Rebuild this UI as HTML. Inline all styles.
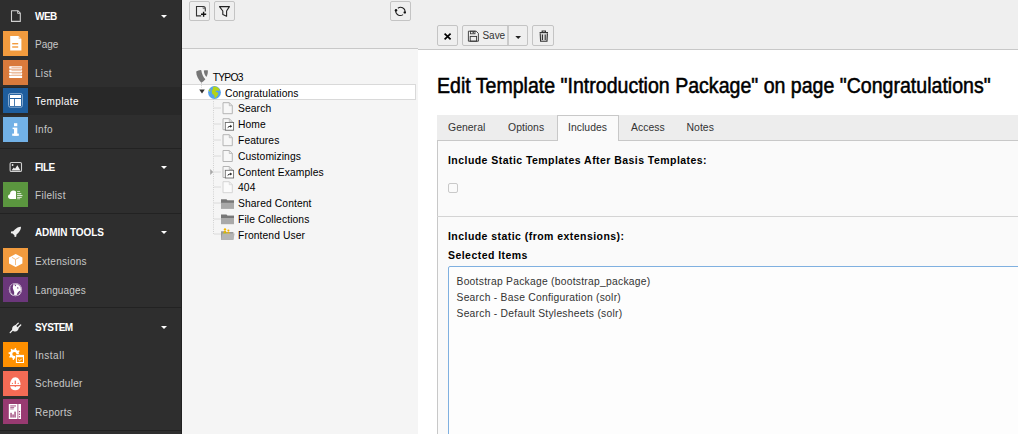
<!DOCTYPE html>
<html><head><meta charset="utf-8">
<style>
*{box-sizing:border-box;margin:0;padding:0}
html,body{width:1018px;height:434px;overflow:hidden;background:#fff}
body{position:relative;font-family:"Liberation Sans",sans-serif;}
.a{position:absolute}
.t{position:absolute;white-space:nowrap;line-height:1}
/* sidebar */
#side{left:0;top:0;width:182px;height:434px;background:#2e2e2e}
.sep{position:absolute;left:0;width:181px;height:1px;background:#222}
.hd{position:absolute;left:35px;font-size:10px;font-weight:bold;color:#fff;letter-spacing:-0.1px}
.it{position:absolute;left:35px;font-size:10px;color:#c8c8c8;letter-spacing:0.3px}
.ic{position:absolute;left:3px;width:25px;height:25px}
.arr{position:absolute;left:161px;width:0;height:0;border-left:3px solid transparent;border-right:3px solid transparent;border-top:3.5px solid #fff}
/* tree */
#tree{left:182px;top:0;width:236px;height:434px;background:#f5f5f5}
#treetb{left:182px;top:0;width:236px;height:49px;background:#efefef;border-bottom:1px solid #c8c8c8}
.btn{position:absolute;border:1px solid #c4c4c4;border-radius:2px;background:#efefef}
.tr{position:absolute;font-size:10.3px;color:#000;letter-spacing:0.1px}
/* content */
#doc{left:418px;top:0;width:600px;height:50px;background:#efefef;border-bottom:1px solid #c8c8c8}
.tab{font-size:10.4px;color:#333;letter-spacing:0.05px}
.lbl{font-size:10.5px;font-weight:bold;color:#000;letter-spacing:0.45px}
.sel{font-size:10.3px;color:#333;letter-spacing:0.26px}
</style></head><body>
<div id="side" class="a">
  <div class="sep" style="top:148px"></div>
  <div class="sep" style="top:213px"></div>
  <div class="sep" style="top:307px"></div>
  <div class="sep" style="top:430px"></div>
  <div class="a" style="left:0;top:87px;width:181px;height:28px;background:#282828"></div>
  <div class="a" style="left:181px;top:0;width:1px;height:434px;background:#212121"></div>

  <div class="t hd" style="top:12px;letter-spacing:-0.5px">WEB</div>
  <div class="arr" style="top:15px"></div>
  <div class="t it" style="top:40px;letter-spacing:0px">Page</div>
  <div class="t it" style="top:69px">List</div>
  <div class="t it" style="top:97px;color:#fff;letter-spacing:0.42px">Template</div>
  <div class="t it" style="top:125px">Info</div>

  <div class="t hd" style="top:163px;letter-spacing:-0.5px">FILE</div>
  <div class="arr" style="top:166px"></div>
  <div class="t it" style="top:191px">Filelist</div>

  <div class="t hd" style="top:228px">ADMIN TOOLS</div>
  <div class="arr" style="top:231px"></div>
  <div class="t it" style="top:257px">Extensions</div>
  <div class="t it" style="top:286px;letter-spacing:0.15px">Languages</div>

  <div class="t hd" style="top:323px;letter-spacing:-0.6px">SYSTEM</div>
  <div class="arr" style="top:326px"></div>
  <div class="t it" style="top:351px;letter-spacing:0.5px">Install</div>
  <div class="t it" style="top:379px">Scheduler</div>
  <div class="t it" style="top:408px">Reports</div>

  <svg class="a" style="left:0;top:0" width="182" height="434" viewBox="0 0 182 434">
   <!-- header icons -->
   <g fill="none" stroke="#d0d0d0" stroke-width="1.1" stroke-linejoin="round">
    <path d="M11.5 10.7 H17.8 L20.3 13.2 V21.4 H11.5 Z"/>
    <path d="M17.6 10.9 V13.4 H20.2" stroke-width="0.9"/>
    <rect x="10.1" y="162.5" width="11.4" height="9" rx="1.3"/>
   </g>
   <g fill="#eeeeee">
    <circle cx="12.6" cy="165" r="0.9"/>
    <path d="M11.4 170.4 L13.8 167.6 L15 168.7 L17.4 165.3 L20.4 170.4 Z"/>
    <!-- rocket -->
    <path d="M20.9 226.7 C18.5 226.8 16.6 227.8 14.9 229.6 L13.2 231.3 L11 231.6 L10.9 233.2 L12.6 233.4 L14.4 235.2 L14.6 236.9 L16.2 236.8 L16.5 234.6 L18.2 232.9 C20 231.2 21 229.3 21 226.8 Z"/>
    <!-- plug -->
    <path d="M15.6 325.2 C13.6 325.2 12.3 326.6 12.1 328.4 C12 330.1 13.6 331.7 15.3 331.6 C17 331.5 18.5 330.2 18.6 328.3 Z"/>
   </g>
   <path d="M10.2 332.6 L13.5 329.3 M15.5 325.9 L18.3 323.1 M17.9 327.8 L20.7 325" stroke="#f2f2f2" stroke-width="1.3" stroke-linecap="round" fill="none"/>

   <!-- Page -->
   <rect x="3" y="31" width="25" height="25" fill="#f29b3e"/>
   <path d="M10.2 36.1 H18.6 L21.4 38.9 V50.5 H10.2 Z" fill="#fff"/>
   <path d="M18.6 36.1 V38.9 H21.4 Z" fill="#f7c592"/>
   <rect x="12.2" y="43" width="6" height="1.4" fill="#f29b3e"/>
   <rect x="12.2" y="46.3" width="6" height="1.4" fill="#f29b3e"/>

   <!-- List -->
   <rect x="3" y="60" width="25" height="25" fill="#d97a3c"/>
   <g fill="#fff">
    <rect x="9.2" y="66.2" width="12.9" height="2.5" rx="0.6"/>
    <rect x="9.2" y="69.4" width="12.9" height="2.5" rx="0.6"/>
    <rect x="9.2" y="72.6" width="12.9" height="2.5" rx="0.6"/>
    <rect x="9.2" y="75.6" width="12.9" height="2.5" rx="0.6"/>
   </g>
   <g fill="#eab08c">
    <rect x="11.5" y="67.1" width="10" height="0.8"/>
    <rect x="11.5" y="70.3" width="10" height="0.8"/>
    <rect x="11.5" y="73.5" width="10" height="0.8"/>
   </g>

   <!-- Template -->
   <rect x="3" y="88" width="25" height="25" fill="#1e5d9d"/>
   <rect x="8.6" y="93.6" width="13.8" height="13.6" rx="1.6" fill="none" stroke="#8fb0d4" stroke-width="1"/>
   <g fill="#fff">
    <rect x="10" y="95" width="11" height="3"/>
    <rect x="10" y="99" width="4" height="7"/>
    <rect x="14.8" y="99" width="6.2" height="7"/>
   </g>

   <!-- Info -->
   <rect x="3" y="117" width="25" height="25" fill="#72b1e6"/>
   <g fill="#fff">
    <rect x="14" y="123.2" width="3.3" height="3"/>
    <rect x="14" y="127.6" width="3.3" height="8"/>
    <rect x="12.6" y="127.6" width="1.6" height="1.5"/>
    <rect x="12.2" y="133.6" width="6.6" height="2.2"/>
   </g>

   <!-- Filelist -->
   <rect x="3" y="182" width="25" height="25" fill="#5b963f"/>
   <path d="M16 199 H10.5 C9 199 8 198 8 196.6 C8 195.3 8.9 194.4 10 194.2 C10 192 11.5 190.6 13.3 190.6 C14.3 190.6 15.2 191 16 191.6 Z" fill="#fff"/>
   <g fill="#dfe9d9">
    <rect x="17.1" y="191.2" width="3" height="0.8"/>
    <rect x="17.1" y="193.1" width="4.2" height="1.1"/>
    <rect x="17.1" y="195" width="5.4" height="1.1"/>
    <rect x="17.1" y="196.9" width="4.6" height="1"/>
    <rect x="17.1" y="198.4" width="3" height="0.8"/>
   </g>

   <!-- Extensions -->
   <rect x="3" y="248" width="25" height="25" fill="#f29b3e"/>
   <path d="M15.7 254 L22.4 257.4 V263.6 L15.7 267 L9 263.6 V257.4 Z" fill="#fff"/>
   <path d="M12 257.4 L15.5 259.4 L19.4 257.4 M15.5 259.4 V265" stroke="#f5b877" stroke-width="0.9" fill="none"/>

   <!-- Languages -->
   <rect x="3" y="277" width="25" height="25" fill="#6b377b"/>
   <circle cx="15.45" cy="289.6" r="6.6" fill="#fff"/>
   <g fill="#6b377b">
    <path d="M10.2 288 C10.6 286 11.8 284.6 13.2 284 C13.6 285.2 12.8 286.4 12.8 287.6 C12.8 289 13.6 290.2 14 291.4 C14.4 292.8 14.2 294 13.8 295 C11.6 294.2 10.2 292 10.2 289.6 Z"/>
    <path d="M14.6 284.3 C15.6 284.6 16.4 285.4 16 286.2 C15.2 286.4 14.6 285.6 14.6 284.3 Z"/>
    <path d="M17.2 287.4 C18 287.2 18.6 287.8 18.4 288.6 C17.8 289 17.2 288.4 17.2 287.4 Z"/>
    <path d="M20.4 290.6 C20.2 292.6 19 294.4 17 295.2 C16.8 294 17.4 292.8 18.2 292 C19 291.4 19.6 290.8 20.4 290.6 Z"/>
   </g>
   <circle cx="15.45" cy="289.6" r="5.9" fill="none" stroke="#6b377b" stroke-width="0.6"/>

   <!-- Install -->
   <rect x="3" y="342" width="25" height="25" fill="#ff9000"/>
   <path d="M19.00 354.00 L20.37 354.56 L20.13 355.76 L18.65 355.76 L17.65 357.25 L18.22 358.62 L17.21 359.30 L16.16 358.25 L14.40 358.60 L13.84 359.97 L12.64 359.73 L12.64 358.25 L11.15 357.25 L9.78 357.82 L9.10 356.81 L10.15 355.76 L9.80 354.00 L8.43 353.44 L8.67 352.24 L10.15 352.24 L11.15 350.75 L10.58 349.38 L11.59 348.70 L12.64 349.75 L14.40 349.40 L14.96 348.03 L16.16 348.27 L16.16 349.75 L17.65 350.75 L19.02 350.18 L19.70 351.19 L18.65 352.24 Z M16.50 354.00 A2.1 2.1 0 1 0 12.30 354.00 A2.1 2.1 0 1 0 16.50 354.00 Z" fill="#fff" fill-rule="evenodd"/>
   <rect x="15.2" y="354.2" width="9.5" height="9.5" fill="#ff9000"/>
   <rect x="16.4" y="355.4" width="7.1" height="7.1" fill="#ff9000" stroke="#fff" stroke-width="1"/>
   <rect x="16.4" y="355.4" width="7.1" height="1.8" fill="#fff"/>
   <path d="M18.2 359.6 L19.6 360.9 L21.8 358.7" stroke="#fff" stroke-width="0.9" fill="none"/>

   <!-- Scheduler -->
   <rect x="3" y="371" width="25" height="25" fill="#f46b55"/>
   <path d="M10 385 C10 380.6 12.4 377.2 15.3 377.2 C18.2 377.2 20.6 380.6 20.6 385 Z" fill="#fff"/>
   <path d="M10.2 386.2 H14.4 L15.3 387.2 L16.2 386.2 H20.4 C20 388.8 18 390.2 15.3 390.2 C12.6 390.2 10.6 388.8 10.2 386.2 Z" fill="#fff"/>
   <rect x="14.7" y="380.6" width="1.2" height="3.4" fill="#f46b55"/>
   <circle cx="12.4" cy="383.4" r="0.6" fill="#f46b55"/>
   <circle cx="18.2" cy="383.4" r="0.6" fill="#f46b55"/>

   <!-- Reports -->
   <rect x="3" y="399" width="25" height="25" fill="#983a71"/>
   <rect x="8.8" y="404" width="12.2" height="15" fill="#fff"/>
   <g fill="#983a71">
    <rect x="10.2" y="405.5" width="5.8" height="0.9"/>
    <rect x="10.2" y="407.2" width="4" height="0.7"/>
    <rect x="10.2" y="408.6" width="3.5" height="0.7"/>
    <rect x="10.4" y="412.8" width="1.3" height="4.8"/>
    <rect x="12.4" y="414.4" width="1.3" height="3.2"/>
    <rect x="14.4" y="411.6" width="1.3" height="6"/>
    <rect x="17.5" y="404" width="0.8" height="15"/>
    <rect x="18.9" y="411" width="1.2" height="1.2"/>
    <rect x="18.9" y="413.6" width="1.2" height="1.2"/>
    <rect x="18.9" y="416.2" width="1.2" height="1.2"/>
   </g>
  </svg>
</div>

<div id="tree" class="a"></div>
<div id="treetb" class="a"></div>
<div class="btn" style="left:189px;top:1px;width:21px;height:20px"></div>
<div class="btn" style="left:214px;top:1px;width:21px;height:20px"></div>
<div class="btn" style="left:390px;top:1px;width:21px;height:20px"></div>

<div class="a" style="left:182px;top:84px;width:234px;height:16px;background:#fff;border:1px solid #d9d9d9;border-left:none"></div>
<svg class="a" style="left:182px;top:0" width="236" height="434" viewBox="182 0 236 434">
   <!-- TYPO3 logo -->
   <path d="M196.2 71.6 C197.5 70.8 199.2 70.2 200.6 70.1 L201.3 70.2 C201.8 73.6 203.2 77 205.4 79.3 C204.2 80.7 202.8 81.9 201.3 82.7 C198.4 80 196.2 75.8 196.2 71.6 Z" fill="#767676"/>
   <path d="M203.8 70.4 C205.2 70.2 206.6 70.1 207.8 70.2 C208.1 72.6 207.6 75 206.3 76.9 C204.8 75 203.9 72.7 203.8 70.4 Z" fill="#767676"/>
   <!-- dotted lines -->
   <g stroke="#d0d0d0" stroke-width="1" stroke-dasharray="1 1.2" fill="none">
    <path d="M201.5 83 V88"/>
    <path d="M213.5 99 V234"/>
    </g>
   <path d="M214 108 H221 M214 124 H221 M214 140 H221 M214 156 H221 M214 172 H221 M214 187 H221 M214 203 H221 M214 219 H221 M214 234 H221" stroke="#dadada" stroke-width="1" fill="none"/>
   <!-- expand arrow -->
   <path d="M199.2 89.4 H204.8 L202 93.4 Z" fill="#333"/>
   <!-- globe -->
   <circle cx="214.5" cy="92.5" r="6.4" fill="#55a3ef"/>
   <path d="M213.4 86.6 C215.8 86.3 218.4 87.4 219.6 89.6 C219.9 90.8 218.8 91.2 218 90.6 C217 90.2 216 90.8 215.4 91.4 C216.2 92 217.6 92.2 218.2 93 C218.4 94.4 217.4 96 216.4 97 C215.8 97.8 215.2 98.4 214.8 98.2 C214.6 96.8 214.4 95.4 213.4 94.6 C212.4 94.2 211.8 93.2 212 92.2 C211.4 91.4 211.8 90.2 212.6 89.4 C213 88.6 213 87.6 213.4 86.6 Z" fill="#b5d418"/>
   <path d="M208.6 91 C209 89.6 209.6 88.8 210.2 88.4 C210.6 89.4 210.4 90.8 209.8 91.4 Z" fill="#b5d418"/>
   <!-- collapsed arrow -->
   <path d="M210.2 169 V175 L213.2 172 Z" fill="#a8a8a8"/>
   <path d="M223.0 102.7 H229.3 L232.3 105.7 V113.7 H223.0 Z" fill="#f7f7f7" stroke="#b4b4b4" stroke-width="1"/>
   <path d="M229.3 102.7 V105.7 H232.3" fill="none" stroke="#b4b4b4" stroke-width="0.8"/>
   <path d="M223.0 118.7 H229.3 L232.3 121.7 V129.7 H223.0 Z" fill="#f7f7f7" stroke="#b4b4b4" stroke-width="1"/>
   <path d="M229.3 118.7 V121.7 H232.3" fill="none" stroke="#b4b4b4" stroke-width="0.8"/>
   <rect x="225.3" y="122.5" width="8.3" height="7.7" fill="#fff" stroke="#666" stroke-width="0.85"/>
   <path d="M227.6 128.4 C227.6 126.8 228.7 125.8 230.3 125.8 V124.8 L232.1 126.3 L230.3 127.8 V126.8 C229.1 126.8 228.3 127.4 227.6 128.4 Z" fill="#111"/>
   <path d="M223.0 134.7 H229.3 L232.3 137.7 V145.7 H223.0 Z" fill="#f7f7f7" stroke="#b4b4b4" stroke-width="1"/>
   <path d="M229.3 134.7 V137.7 H232.3" fill="none" stroke="#b4b4b4" stroke-width="0.8"/>
   <path d="M223.0 150.5 H229.3 L232.3 153.5 V161.5 H223.0 Z" fill="#f7f7f7" stroke="#b4b4b4" stroke-width="1"/>
   <path d="M229.3 150.5 V153.5 H232.3" fill="none" stroke="#b4b4b4" stroke-width="0.8"/>
   <path d="M223.0 166.5 H229.3 L232.3 169.5 V177.5 H223.0 Z" fill="#f7f7f7" stroke="#b4b4b4" stroke-width="1"/>
   <path d="M229.3 166.5 V169.5 H232.3" fill="none" stroke="#b4b4b4" stroke-width="0.8"/>
   <rect x="225.3" y="170.3" width="8.3" height="7.7" fill="#fff" stroke="#666" stroke-width="0.85"/>
   <path d="M227.6 176.2 C227.6 174.6 228.7 173.6 230.3 173.6 V172.6 L232.1 174.1 L230.3 175.6 V174.6 C229.1 174.6 228.3 175.2 227.6 176.2 Z" fill="#111"/>
   <path d="M223.0 181.7 H229.3 L232.3 184.7 V192.7 H223.0 Z" fill="#fbfbfb" stroke="#d4d4d4" stroke-width="1"/>
   <path d="M229.3 181.7 V184.7 H232.3" fill="none" stroke="#d4d4d4" stroke-width="0.8"/>
   <rect x="221" y="200.3" width="13" height="8.6" fill="#a9a9a9"/>
   <path d="M221 199.3 H226.5 L227.5 200.5 H234 V202.70000000000002 H221 Z" fill="#777"/>
   <rect x="221" y="215.6" width="13" height="8.6" fill="#a9a9a9"/>
   <path d="M221 214.6 H226.5 L227.5 215.79999999999998 H234 V218.0 H221 Z" fill="#777"/>
   <path d="M221 231.2 H225.6 L226.4 232 H233.4 V239.8 H221 Z" fill="#9a9a9a"/>
   <circle cx="225" cy="229.4" r="1.2" fill="#f2b400"/>
   <path d="M223.3 234.5 C223.3 232 224 230.8 225 230.8 C226 230.8 226.7 232 226.7 234.5 Z" fill="#f2b400"/>
   <circle cx="228.4" cy="230.6" r="1.1" fill="#f2b400"/>
   <path d="M226.9 235 C226.9 233 227.5 232 228.4 232 C229.3 232 229.9 233 229.9 235 Z" fill="#f2b400"/>
   <path d="M222.8 234 L225.6 232.2 L226.2 233.2 L223.4 235 Z" fill="#8fc31f"/>
   <path d="M222.4 233.6 H234.6 L233.4 239.8 H221 Z" fill="#b4b4b4"/>
  </svg>


<div id="doc" class="a"></div>
<div class="t tr" style="left:212.8px;top:73px;letter-spacing:-0.8px">TYPO3</div>
<div class="t tr" style="left:225px;top:89px">Congratulations</div>
<div class="t tr" style="left:238px;top:104px">Search</div>
<div class="t tr" style="left:238px;top:120px">Home</div>
<div class="t tr" style="left:238px;top:136px">Features</div>
<div class="t tr" style="left:238px;top:152px">Customizings</div>
<div class="t tr" style="left:238px;top:168px">Content Examples</div>
<div class="t tr" style="left:238px;top:183px">404</div>
<div class="t tr" style="left:238px;top:199px">Shared Content</div>
<div class="t tr" style="left:238px;top:215px">File Collections</div>
<div class="t tr" style="left:238px;top:231px">Frontend User</div>
<div class="btn" style="left:437px;top:25px;width:21px;height:21px"></div>
<div class="btn" style="left:462px;top:25px;width:66px;height:21px"></div>
<div class="a" style="left:507px;top:26px;width:2px;height:19px;background:#cacaca"></div>
<div class="btn" style="left:532px;top:25px;width:22px;height:21px"></div>
<svg class="a" style="left:182px;top:0" width="836" height="50" viewBox="182 0 836 50">
 <!-- new page -->
 <path d="M201.2 15.9 H196.5 V6.5 H203.4 C204.6 6.5 205.3 7.6 205.3 8.8 V11.5" fill="none" stroke="#333" stroke-width="1.1"/>
 <path d="M203.1 6.6 V8.6 H205.2" fill="none" stroke="#555" stroke-width="0.7"/>
 <path d="M203.6 11.8 V16.8 M201 14.3 H206.2" stroke="#111" stroke-width="1.4"/>
 <!-- filter -->
 <path d="M219.5 6.6 H229.4 L226.6 11 V16.2 L222.8 14.6 V11 Z" fill="none" stroke="#222" stroke-width="1.1" stroke-linejoin="round"/>
 <!-- refresh -->
 <path d="M397.9 8.2 A4.6 4.6 0 0 1 405.2 11.8" fill="none" stroke="#222" stroke-width="1.1"/>
 <path d="M403 14.6 A4.6 4.6 0 0 1 395.7 10.6" fill="none" stroke="#222" stroke-width="1.1"/>
 <circle cx="396" cy="10.3" r="1.2" fill="#111"/>
 <circle cx="404.8" cy="12.4" r="1.2" fill="#111"/>
 <!-- close -->
 <path d="M444.6 33.6 L450.6 39.4 M450.6 33.6 L444.6 39.4" stroke="#000" stroke-width="1.7"/>
 <!-- save floppy -->
 <path d="M468.4 31.2 H476.2 L478.4 33.4 V41.2 H468.4 Z" fill="none" stroke="#333" stroke-width="0.9"/>
 <rect x="470.4" y="31.2" width="4.6" height="2.6" fill="none" stroke="#333" stroke-width="0.8"/>
 <rect x="472.6" y="31.6" width="1.2" height="1.8" fill="#333"/>
 <rect x="470.2" y="36.4" width="6.4" height="4.8" fill="none" stroke="#333" stroke-width="0.9"/>
 <!-- caret -->
 <path d="M515.3 36 H521.1 L518.2 39.1 Z" fill="#222"/>
 <!-- trash -->
 <path d="M539.6 32.6 H548 M542.2 32.4 V31 H545.4 V32.4" fill="none" stroke="#333" stroke-width="1.2"/>
 <path d="M540.2 33.4 L540.6 41.2 H547 L547.4 33.4" fill="#ddd" stroke="#333" stroke-width="1.1"/>
 <path d="M542.4 34.5 V40 M545.2 34.5 V40" stroke="#222" stroke-width="1"/>
</svg>
<div class="t" style="left:482.5px;top:30.5px;font-size:10px;color:#333;letter-spacing:-0.05px">Save</div>

<div class="t" style="left:437px;top:75px;font-size:22px;color:#000;transform-origin:0 0;transform:scaleX(0.889);-webkit-text-stroke:0.55px #000">Edit Template "Introduction Package" on page "Congratulations"</div>

<div class="a" style="left:437px;top:115px;width:581px;height:26px;background:#ededed;border-bottom:1px solid #c8c8c8"></div>
<div class="a" style="left:557px;top:115px;width:62px;height:26px;background:#fafafa;border:1px solid #c8c8c8;border-bottom:none"></div>
<div class="t tab" style="left:448px;top:123px">General</div>
<div class="t tab" style="left:508px;top:123px">Options</div>
<div class="t tab" style="left:568px;top:123px">Includes</div>
<div class="t tab" style="left:631px;top:123px">Access</div>
<div class="t tab" style="left:686.5px;top:123px">Notes</div>

<div class="a" style="left:437px;top:141px;width:581px;height:293px;background:#fafafa;border-left:1px solid #c8c8c8"></div>
<div class="a" style="left:558px;top:140px;width:60px;height:1px;background:#fafafa"></div>
<div class="a" style="left:437px;top:216px;width:581px;height:1px;background:#d4d4d4"></div>
<div class="t lbl" style="left:448px;top:155px">Include Static Templates After Basis Templates:</div>
<div class="a" style="left:448px;top:183px;width:10px;height:10px;border:1px solid #c9c9c9;border-radius:2px;background:#fafafa"></div>
<div class="t lbl" style="left:448px;top:230.5px">Include static (from extensions):</div>
<div class="t lbl" style="left:448px;top:250px">Selected Items</div>
<div class="a" style="left:448px;top:266px;width:580px;height:180px;background:#fdfdfd;border:1px solid #7fb0e0;border-radius:2px"></div>
<div class="t sel" style="left:456.5px;top:276.5px">Bootstrap Package (bootstrap_package)</div>
<div class="t sel" style="left:456.5px;top:292.5px">Search - Base Configuration (solr)</div>
<div class="t sel" style="left:456.5px;top:308.5px">Search - Default Stylesheets (solr)</div>
</body></html>
